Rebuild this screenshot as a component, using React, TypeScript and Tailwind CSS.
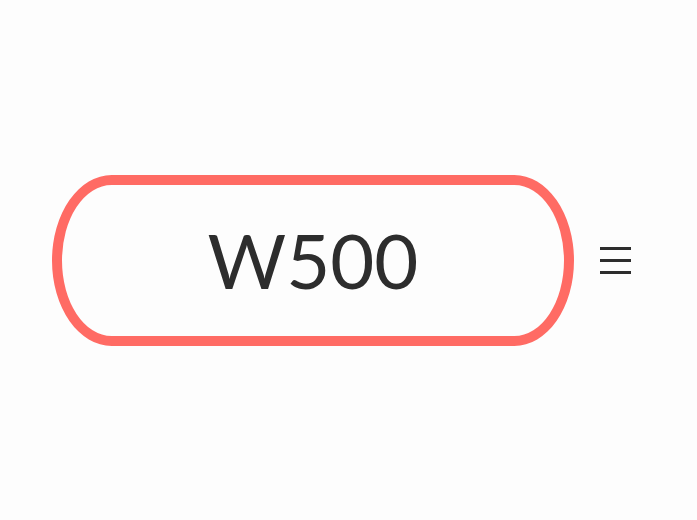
export default function App() {
  return (
    <div className="flex h-[520px] w-[697px] items-center bg-[#fdfdfd] pl-[52px]">
      <div className="flex h-[171px] w-[522px] items-center justify-center rounded-[60px/86px] border-[10px] border-[#ff6b64]">
        <span className="font-['Lato',sans-serif] text-[76px] leading-none text-[#2d2d2d]">W500</span>
      </div>
      <div className="ml-[26px] flex w-[31px] flex-col gap-[9px]">
        <span className="h-[3px] bg-[#2d2d2d]" />
        <span className="h-[3px] bg-[#2d2d2d]" />
        <span className="h-[3px] bg-[#2d2d2d]" />
      </div>
    </div>
  );
}
